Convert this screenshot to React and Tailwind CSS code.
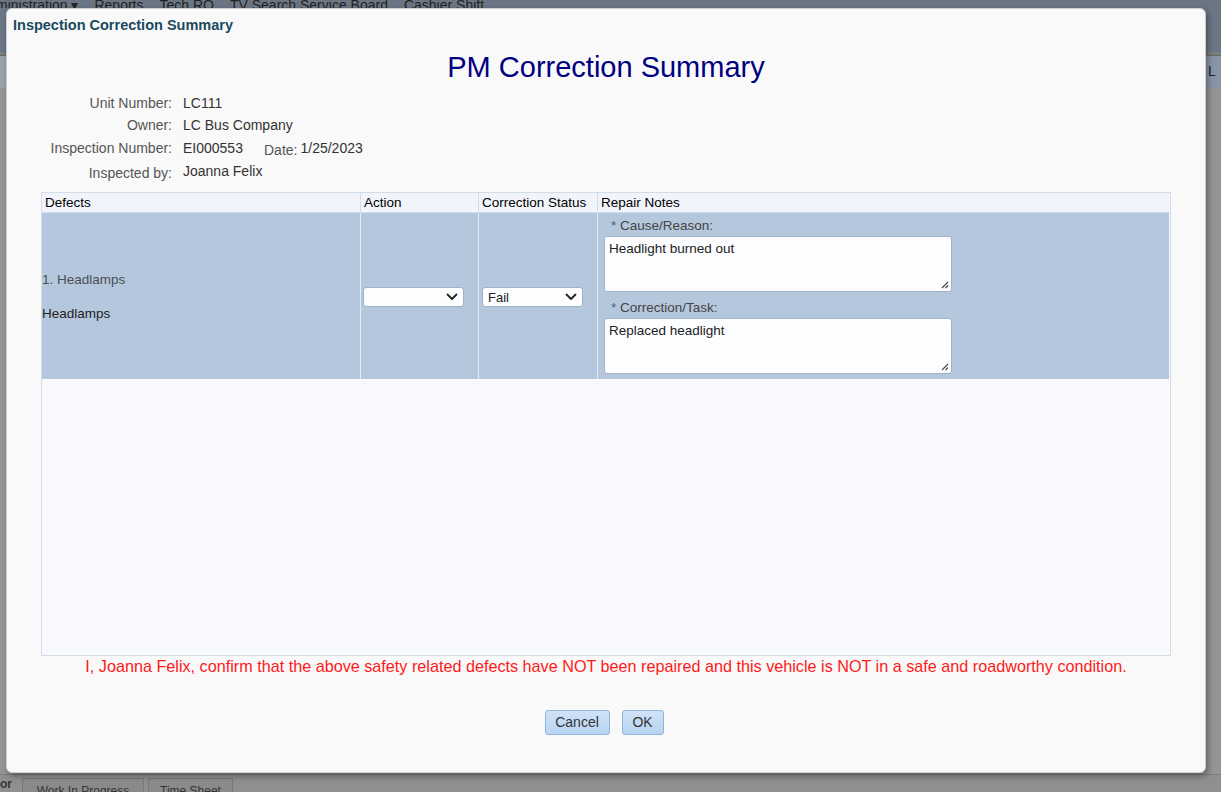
import React from "react";

function Chevron() {
  return (
    <svg width="12" height="8" viewBox="0 0 12 8" className="shrink-0">
      <path d="M1.5 1.5 L6 6 L10.5 1.5" fill="none" stroke="#222" strokeWidth="1.8" strokeLinecap="round" strokeLinejoin="round" />
    </svg>
  );
}

function Select({ value }) {
  return (
    <div className="flex items-center justify-between h-[20px] w-[101px] bg-[#fbfdff] rounded-[3px] border border-[#9fb2c8] px-[5px]">
      <span className="text-[13px] text-[#222] leading-none">{value}</span>
      <Chevron />
    </div>
  );
}

function Grip() {
  return (
    <svg width="9" height="9" viewBox="0 0 9 9" className="absolute right-[2px] bottom-[2px]">
      <path d="M8 2 L2 8 M8 5.5 L5.5 8" stroke="#444" strokeWidth="1.1" />
    </svg>
  );
}

function TextBox({ value }) {
  return (
    <div className="relative w-[348px] h-[56px] bg-[#fbfdff] rounded-[3px] border border-[#9fb2c8] pl-[4px] pt-[2px] text-[13.5px] text-[#222]">
      {value}
      <Grip />
    </div>
  );
}

export default function App() {
  const font = { fontFamily: '"Liberation Sans", Arial, sans-serif' };
  return (
    <div className="relative w-[1221px] h-[792px] overflow-hidden bg-[#8e8e8e]" style={font}>
      {/* background page (dimmed) */}
      <div className="flex flex-col h-full">
        <div className="h-[8px] bg-[#6b7684] flex items-end gap-[16px] text-[14px] text-[#222] overflow-hidden leading-none">
          <span className="-ml-[4px] translate-y-[4px]">ministration ▾</span>
          <span className="translate-y-[4px]">Reports</span>
          <span className="translate-y-[4px]">Tech RO</span>
          <span className="translate-y-[4px]">TV Search Service Board</span>
          <span className="translate-y-[4px]">Cashier Shift</span>
        </div>
        <div className="h-[44px] bg-[#6b7684]" />
        <div className="h-[4px] bg-[#7d7d7d] border-b border-[#6a6a6a]" />
        <div className="h-[32px] bg-[#9aa3ad] flex justify-end">
          <div className="w-[20px] h-full bg-[#8795a5] border-l border-[#7a8796] text-[14px] text-[#222] pl-[6px] pt-[8px] leading-none">L</div>
        </div>
        <div className="flex-1 bg-[#959595]" />
        <div className="h-[18px] bg-[#8f8f8f] border-t border-[#7b7b7b] flex items-end gap-[4px] text-[12px] text-[#333] leading-none">
          <span className="font-bold pb-[2px] w-[18px]">or</span>
          <span className="h-[14px] w-[122px] text-center bg-[#8a8a8a] border border-[#777] border-b-0 pt-[6px]">Work In Progress</span>
          <span className="h-[14px] w-[85px] text-center bg-[#8a8a8a] border border-[#777] border-b-0 pt-[6px]">Time Sheet</span>
        </div>
      </div>

      {/* modal */}
      <div className="absolute left-[6px] top-[8px] w-[1200px] h-[765px] bg-[#f9f9f9] rounded-[6px] border border-[#c9ced4] shadow-[2px_3px_6px_rgba(0,0,0,0.35)] flex flex-col">
        <div className="pl-[6px] pt-[7px] text-[14.5px] font-bold text-[#1b4a5e] leading-[18px]">
          Inspection Correction Summary
        </div>
        <div className="text-center text-[29px] text-[#000080] leading-[34px] mt-[16px]">
          PM Correction Summary
        </div>

        <div className="mt-[8px] flex flex-col text-[14px]">
          <div className="flex h-[22px] items-center">
            <span className="w-[165px] text-right text-[#555]">Unit Number:</span>
            <span className="ml-[11px] text-[#333]">LC111</span>
          </div>
          <div className="flex h-[22px] items-center">
            <span className="w-[165px] text-right text-[#555]">Owner:</span>
            <span className="ml-[11px] text-[#333]">LC Bus Company</span>
          </div>
          <div className="flex h-[25px] items-center">
            <span className="w-[165px] text-right text-[#555]">Inspection Number:</span>
            <span className="ml-[11px] text-[#333] w-[70px]">EI000553</span>
            <span className="ml-[11px] text-[#555] mt-[4px]">Date:</span>
            <span className="ml-[3px] text-[#333]">1/25/2023</span>
          </div>
          <div className="flex h-[21px] items-center">
            <span className="w-[165px] text-right text-[#555] mt-[3px]">Inspected by:</span>
            <span className="ml-[11px] text-[#333]">Joanna Felix</span>
          </div>
        </div>

        {/* table */}
        <div className="ml-[34px] mt-[10px] w-[1130px] h-[464px] border border-[#d3dde8] bg-[#f7f9fd] flex flex-col text-[13.5px]">
          <div className="flex h-[20px] bg-[#f1f5fb] border-b border-[#d3dde8] text-black leading-[20px]">
            <div className="w-[319px] pl-[3px] border-r border-[#d3dde8]">Defects</div>
            <div className="w-[118px] pl-[3px] border-r border-[#d3dde8]">Action</div>
            <div className="w-[119px] pl-[3px] border-r border-[#d3dde8]">Correction Status</div>
            <div className="flex-1 pl-[3px]">Repair Notes</div>
          </div>
          <div className="flex h-[166px] bg-[#b5c7dc] w-[1127px]">
            <div className="w-[319px] border-r border-[#e4ebf3] flex flex-col justify-center gap-[14px] pt-[2px]">
              <span className="text-[#4a4f55] leading-[20px]">1. Headlamps</span>
              <span className="text-[#222] leading-[20px]">Headlamps</span>
            </div>
            <div className="w-[118px] border-r border-[#e4ebf3] flex items-center pl-[2px] pt-[2px]">
              <Select value="" />
            </div>
            <div className="w-[119px] border-r border-[#e4ebf3] flex items-center pl-[3px] pt-[2px]">
              <Select value="Fail" />
            </div>
            <div className="flex-1 flex flex-col pl-[6px] pt-[4px]">
              <div className="pl-[7px] text-[#444] leading-[18px]"><span className="text-[#3d6088]">*</span> Cause/Reason:</div>
              <div className="mt-[1px]"><TextBox value="Headlight burned out" /></div>
              <div className="pl-[7px] text-[#444] leading-[18px] mt-[7px]"><span className="text-[#3d6088]">*</span> Correction/Task:</div>
              <div className="mt-[1px]"><TextBox value="Replaced headlight" /></div>
            </div>
          </div>
        </div>

        <div className="text-center text-[16.2px] text-[#ff1a1a] mt-[0px] leading-[20px]">
          I, Joanna Felix, confirm that the above safety related defects have NOT been repaired and this vehicle is NOT in a safe and roadworthy condition.
        </div>

        <div className="flex justify-center gap-[12px] mt-[34px] pr-[4px]">
          <button className="h-[25px] w-[65px] rounded-[3px] border border-[#90b4dc] bg-gradient-to-b from-[#cfe2f7] to-[#b8d4f1] text-[14px] text-[#333]">Cancel</button>
          <button className="h-[25px] w-[42px] rounded-[3px] border border-[#90b4dc] bg-gradient-to-b from-[#cfe2f7] to-[#b8d4f1] text-[14px] text-[#333]">OK</button>
        </div>
      </div>
    </div>
  );
}
